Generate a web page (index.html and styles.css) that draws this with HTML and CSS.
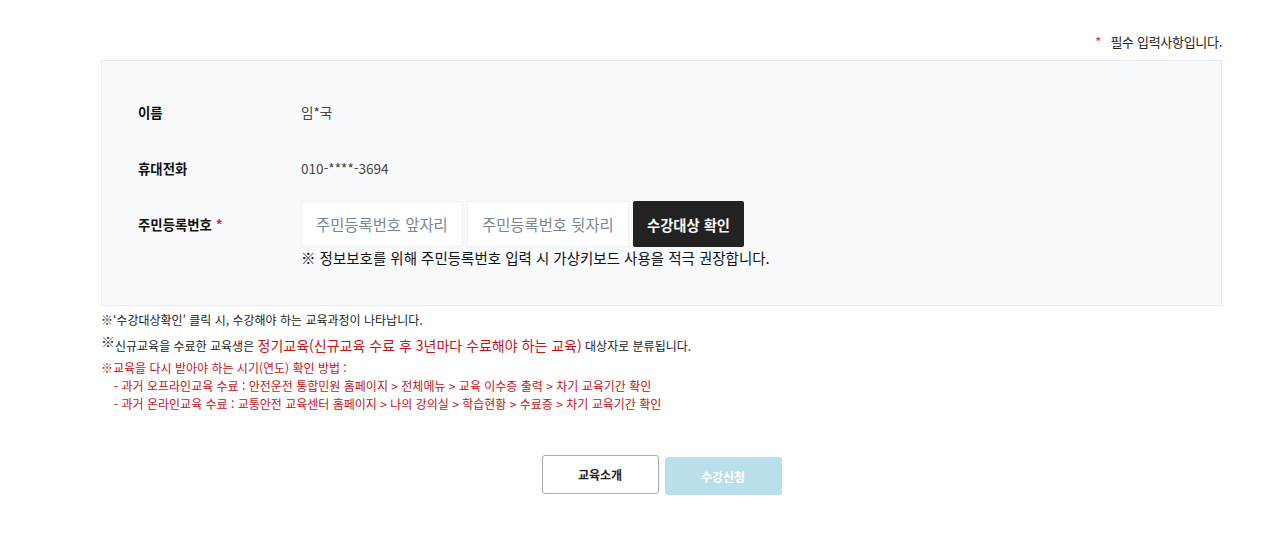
FILE: index.html
```html
<!DOCTYPE html>
<html lang="ko">
<head>
  <meta charset="UTF-8">
  <meta name="viewport" content="width=device-width, initial-scale=1.0">
  <title>수강신청</title>
  <link rel="stylesheet" href="styles.css">
</head>
<body>
  <div class="apply_wrap">
    <p class="req_note"><span class="star">*</span> 필수 입력사항입니다.</p>

    <div class="form_box">
      <div class="row">
        <div class="label">이름</div>
        <div class="value">임*국</div>
      </div>
      <div class="row">
        <div class="label">휴대전화</div>
        <div class="value">010-****-3694</div>
      </div>
      <div class="row row_jumin">
        <div class="label">주민등록번호 <span class="star">*</span></div>
        <div class="value">
          <div class="jumin_inputs">
            <input type="text" class="inp" placeholder="주민등록번호 앞자리">
            <input type="password" class="inp" placeholder="주민등록번호 뒷자리">
            <button type="button" class="btn_check">수강대상 확인</button>
          </div>
          <p class="keyboard_note">※ 정보보호를 위해 주민등록번호 입력 시 가상키보드 사용을 적극 권장합니다.</p>
        </div>
      </div>
    </div>

    <div class="notice">
      <p class="n1">※‘수강대상확인’ 클릭 시, 수강해야 하는 교육과정이 나타납니다.</p>
      <p class="n2"><span class="mark">※</span>신규교육을 수료한 교육생은 <em>정기교육(신규교육 수료 후 3년마다 수료해야 하는 교육)</em> 대상자로 분류됩니다.</p>
      <p class="n3">※교육을 다시 받아야 하는 시기(연도) 확인 방법 :</p>
      <p class="n4">- 과거 오프라인교육 수료 : 안전운전 통합민원 홈페이지 &gt; 전체메뉴 &gt; 교육 이수증 출력 &gt; 차기 교육기간 확인</p>
      <p class="n4">- 과거 온라인교육 수료 : 교통안전 교육센터 홈페이지 &gt; 나의 강의실 &gt; 학습현황 &gt; 수료증 &gt; 차기 교육기간 확인</p>
    </div>

    <div class="btn_area">
      <button type="button" class="btn_intro">교육소개</button>
      <button type="button" class="btn_apply" disabled>수강신청</button>
    </div>
  </div>
</body>
</html>
```

FILE: styles.css
```css
:root {
  --color_red: #c0141b;
  --color_line: #e9ebee;
}

* {
  margin: 0;
  padding: 0;
  box-sizing: border-box;
  font-family: "Noto Sans CJK KR", "Noto Sans", sans-serif;
  color: #222;
}

body {
  margin: 0;
  background: #fff;
}

.apply_wrap {
  width: 1121px;
  margin-left: 101px;
  padding-top: 33px;
}

.req_note {
  font-size: 13px;
  letter-spacing: -0.3px;
  line-height: 18px;
  text-align: right;
  margin-bottom: 9px;
}

.star {
  color: #e0245e;
  margin-right: 6px;
}

.form_box {
  border: 1px solid var(--color_line);
  background: #f9fafc;
  padding: 28px 36px 36px;
  display: flex;
  flex-direction: column;
  gap: 10px;
}

.row {
  display: flex;
  align-items: center;
  min-height: 46px;
}

.row_jumin {
  align-items: flex-start;
}

.row_jumin .label {
  line-height: 46px;
}

.label {
  width: 163px;
  flex: none;
  font-size: 13.4px;
  font-weight: 700;
  color: #111;
}

.label .star {
  margin: 0;
}

.value {
  font-size: 13.6px;
  color: #444;
}

.jumin_inputs {
  display: flex;
  gap: 4px;
}

.inp {
  width: 162px;
  height: 46px;
  border: 1px solid #f0f1f3;
  background: #fff;
  padding: 0 14px;
  font-size: 15.4px;
  outline: none;
}

.inp::placeholder {
  color: #7c8692;
}

.btn_check {
  width: 111px;
  height: 46px;
  border: 0;
  border-radius: 2px;
  background: #222;
  color: #fff;
  font-size: 14.3px;
  font-weight: 700;
  cursor: pointer;
}

.keyboard_note {
  font-size: 14.5px;
  line-height: 22px;
  color: #111;
}

.notice {
  padding-top: 5px;
}

.notice p {
  font-size: 12px;
  line-height: 18px;
}

.notice .n2 {
  margin-top: 0;
  line-height: 24px;
}

.notice .n2 .mark {
  font-size: 14px;
  vertical-align: 4px;
}

.notice .n2 em {
  font-style: normal;
  font-size: 14px;
  color: var(--color_red);
}

.notice .n3 {
  color: var(--color_red);
  margin-top: 1px;
}

.notice .n4 {
  color: var(--color_red);
  padding-left: 13px;
}

.btn_area {
  display: flex;
  justify-content: center;
  align-items: flex-start;
  gap: 6px;
  margin-top: 42px;
}

.btn_intro {
  width: 117px;
  height: 39px;
  border: 1px solid #aaa;
  border-radius: 3px;
  background: #fff;
  font-size: 12px;
  font-weight: 700;
  cursor: pointer;
}

.btn_apply {
  width: 117px;
  height: 38px;
  margin-top: 2px;
  border: 0;
  border-radius: 3px;
  background: #b9e0ea;
  color: #fff;
  font-size: 12px;
  font-weight: 700;
}
```
